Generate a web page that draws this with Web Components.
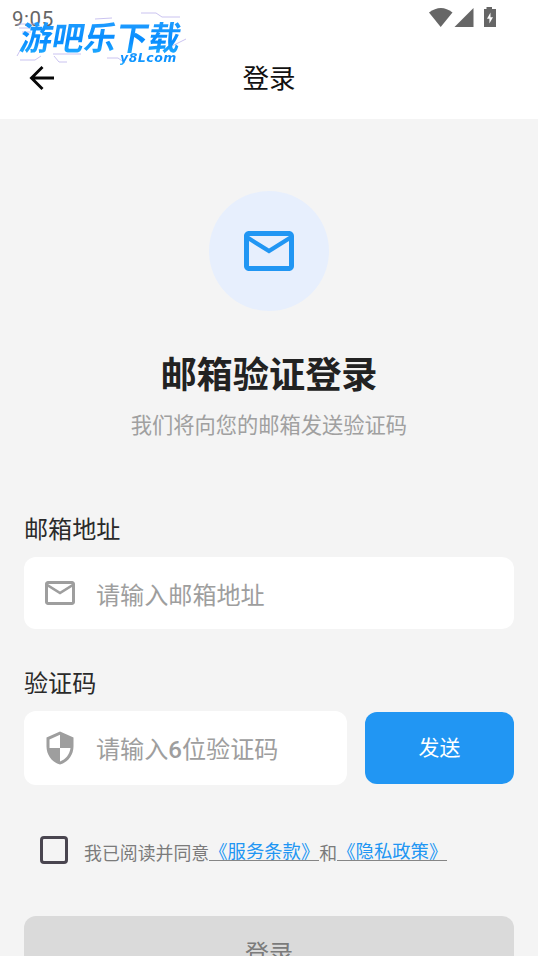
<!DOCTYPE html>
<html lang="zh-CN">
<head>
<meta charset="utf-8">
<title>登录</title>
<style>
html,body{margin:0;padding:0;height:956px;overflow:hidden;background:#f4f4f4}
body{font-family:Roboto,"Noto Sans CJK SC",sans-serif}
</style>
</head>
<body>
<login-page></login-page>
<script>
const define = (name, html) => {
  const t = document.createElement('template');
  t.innerHTML = html;
  customElements.define(name, class extends HTMLElement {
    constructor() {
      super();
      this.attachShadow({ mode: 'open' }).append(t.content.cloneNode(true));
    }
  });
};

define('status-bar', `
<style>
:host{display:flex;justify-content:space-between;height:36px;padding:0 40px 0 12px;box-sizing:border-box;color:#666}
.time{font-size:20.500px;line-height:20px;padding-top:9px;letter-spacing:.55px}
svg{display:block;width:70px;height:24px;padding-top:5px}
</style>
<span class="time">9:05</span>
<svg viewBox="0 5 70 24" fill="#666"><path d="M1 12.500Q13 3.500 24.500 12.500L12.700 27Z"/><path d="M26.500 27H45.500V8Z"/><path fill-rule="evenodd" d="M56 9H58.500V7H64V9H68V27H56ZM62.500 12.500L59 18.800H61.400V23.500L65 17.200H62.500Z"/></svg>`);

define('brand-mark', `
<style>
:host{display:block;width:170px;height:54px;position:relative}
svg{position:absolute;inset:0;overflow:visible}
.name,.site{position:absolute;white-space:nowrap;color:transparent;background:linear-gradient(#2aa4ff,#078cff 60%,#29b5ff);background-clip:text;-webkit-background-clip:text}
.name{left:4px;top:2px;font:700 32px/44px "Noto Sans CJK SC",sans-serif;transform:skewX(-10deg) scaleY(1.03)}
.site{left:103px;top:37px;font:italic 700 12.500px/17px "DejaVu Sans",sans-serif;letter-spacing:.5px}
</style>
<svg width="170" height="54" fill="none" stroke="#bdb4ec" stroke-width=".8"><path d="M0 12H20M2 16H14M5 20H14M78 7L95 6M124 1H139L145 5H163M36 42H64M90 46H101L108 51M3 48H18L24 44M37 44L42 50H50M151 36L169 27M5 35L0 44"/></svg>
<span class="name">游吧乐下载</span><span class="site">y8Lcom</span>`);

define('app-header', `
<style>
:host{display:grid;grid-template-columns:84px 1fr 84px;align-items:center;height:83px;box-sizing:border-box}
svg{display:block;margin-left:26px}
h1{margin:0;padding-top:2px;text-align:center;font-size:26.5px;line-height:40px;font-weight:400;color:#111}
</style>
<svg width="32" height="32" viewBox="0 0 32 32" fill="none" stroke="#080808" stroke-width="2.900"><path d="M28 16H6M16.500 5L5.500 16L16.500 27"/></svg>
<h1><slot></slot></h1>`);

define('mail-icon', `
<style>:host{display:block;width:var(--icon,60px);height:var(--icon,60px)}svg{display:block;width:100%;height:100%}</style>
<svg viewBox="0 0 24 24" fill="currentColor"><path d="M22 6c0-1.100-.9-2-2-2H4c-1.100 0-2 .9-2 2v12c0 1.100.9 2 2 2h16c1.100 0 2-.9 2-2V6zm-2 0l-8 5-8-5h16zm0 12H4V8l8 5 8-5v10z"/></svg>`);

define('shield-icon', `
<style>:host{display:block;width:36px;height:36px}svg{display:block}</style>
<svg width="36" height="36" viewBox="0 0 24 24" fill="currentColor"><path d="M12 1L3 5v6c0 5.550 3.840 10.740 9 12 5.160-1.260 9-6.450 9-12V5l-9-4zm0 10.990h7c-.53 4.120-3.280 7.790-7 8.940V12H5V6.300l7-3.110v8.800z"/></svg>`);

define('page-intro', `
<style>
:host{display:flex;flex-direction:column;align-items:center;text-align:center}
.badge{width:120px;height:120px;border-radius:50%;background:#e7effd;color:#2196f3;display:grid;place-items:center}
h2{margin:40px 0 0;font-size:36.200px;line-height:50px;font-weight:700;color:#222}
p{margin:10px 0 0;font-size:21.25px;line-height:30px;color:#a0a0a0}
</style>
<div class="badge"><mail-icon></mail-icon></div>
<h2><slot name="heading"></slot></h2>
<p><slot></slot></p>`);

define('text-field', `
<style>
:host{display:flex;align-items:center;gap:18px;box-sizing:border-box;height:72px;padding-left:18px;border-radius:12px;background:#fff;color:#9e9e9e;--icon:36px;font-size:24.100px;line-height:36px;white-space:nowrap}
.hint{padding-top:5px}
</style>
<slot name="icon"></slot><span class="hint"><slot></slot></span>`);

define('field-group', `
<style>
:host{display:block}
.label{font-size:24.100px;line-height:36px;color:#2a2a2a;margin-bottom:9px}
.row{display:grid;grid-template-columns:var(--cols,1fr);gap:18px;align-items:center}
</style>
<div class="label"><slot name="label"></slot></div>
<div class="row"><slot></slot></div>`);

define('action-button', `
<style>
:host{display:flex;align-items:center;justify-content:center;box-sizing:border-box;height:72px;border-radius:12px;background:#2196f3;color:#fff;font-size:20.900px;line-height:32px}
:host([disabled]){background:#dadada;color:#7b7b7b;font-size:24px;padding-top:3px}
</style><slot></slot>`);

define('agree-row', `
<style>
:host{display:flex;align-items:center;height:36px;color:#7b7b7b;font-size:17.900px;line-height:28px;white-space:nowrap}
.box{box-sizing:border-box;width:28px;height:28px;border:3px solid #49454f;border-radius:4px;margin-right:16px}
.text{display:flex;padding-top:7px}
</style>
<span class="box"></span><span class="text"><slot></slot></span>`);

define('doc-link', `
<style>
:host{display:block;box-sizing:border-box;height:21px;border-bottom:1.500px solid #858585;color:#2196f3;font-size:18.350px;line-height:24px}
</style><slot></slot>`);

define('login-page', `
<style>
:host{display:block;position:relative;width:538px;height:956px;overflow:hidden;background:#f4f4f4}
header{background:#fff;height:119.400px}
brand-mark{position:absolute;left:17px;top:12px}
main{display:flex;flex-direction:column;padding:72px 24px 0}
.email{margin-top:71px}
.code{margin-top:37px;--cols:323px 149px}
.code text-field{height:74px}
.code .hint-text{position:relative;top:-1px}
.six{font-weight:500}
agree-row{margin:47px 0 48px 16px}
</style>
<header><status-bar></status-bar><app-header>登录</app-header></header>
<brand-mark></brand-mark>
<main>
<page-intro><span slot="heading">邮箱验证登录</span>我们将向您的邮箱发送验证码</page-intro>
<field-group class="email"><span slot="label">邮箱地址</span><text-field><mail-icon slot="icon"></mail-icon>请输入邮箱地址</text-field></field-group>
<field-group class="code"><span slot="label">验证码</span><text-field><shield-icon slot="icon"></shield-icon><span class="hint-text">请输入<span class="six">6</span>位验证码</span></text-field><action-button>发送</action-button></field-group>
<agree-row><span>我已阅读并同意</span><doc-link>《服务条款》</doc-link><span>和</span><doc-link>《隐私政策》</doc-link></agree-row>
<action-button disabled>登录</action-button>
</main>`);
</script>
</body>
</html>
